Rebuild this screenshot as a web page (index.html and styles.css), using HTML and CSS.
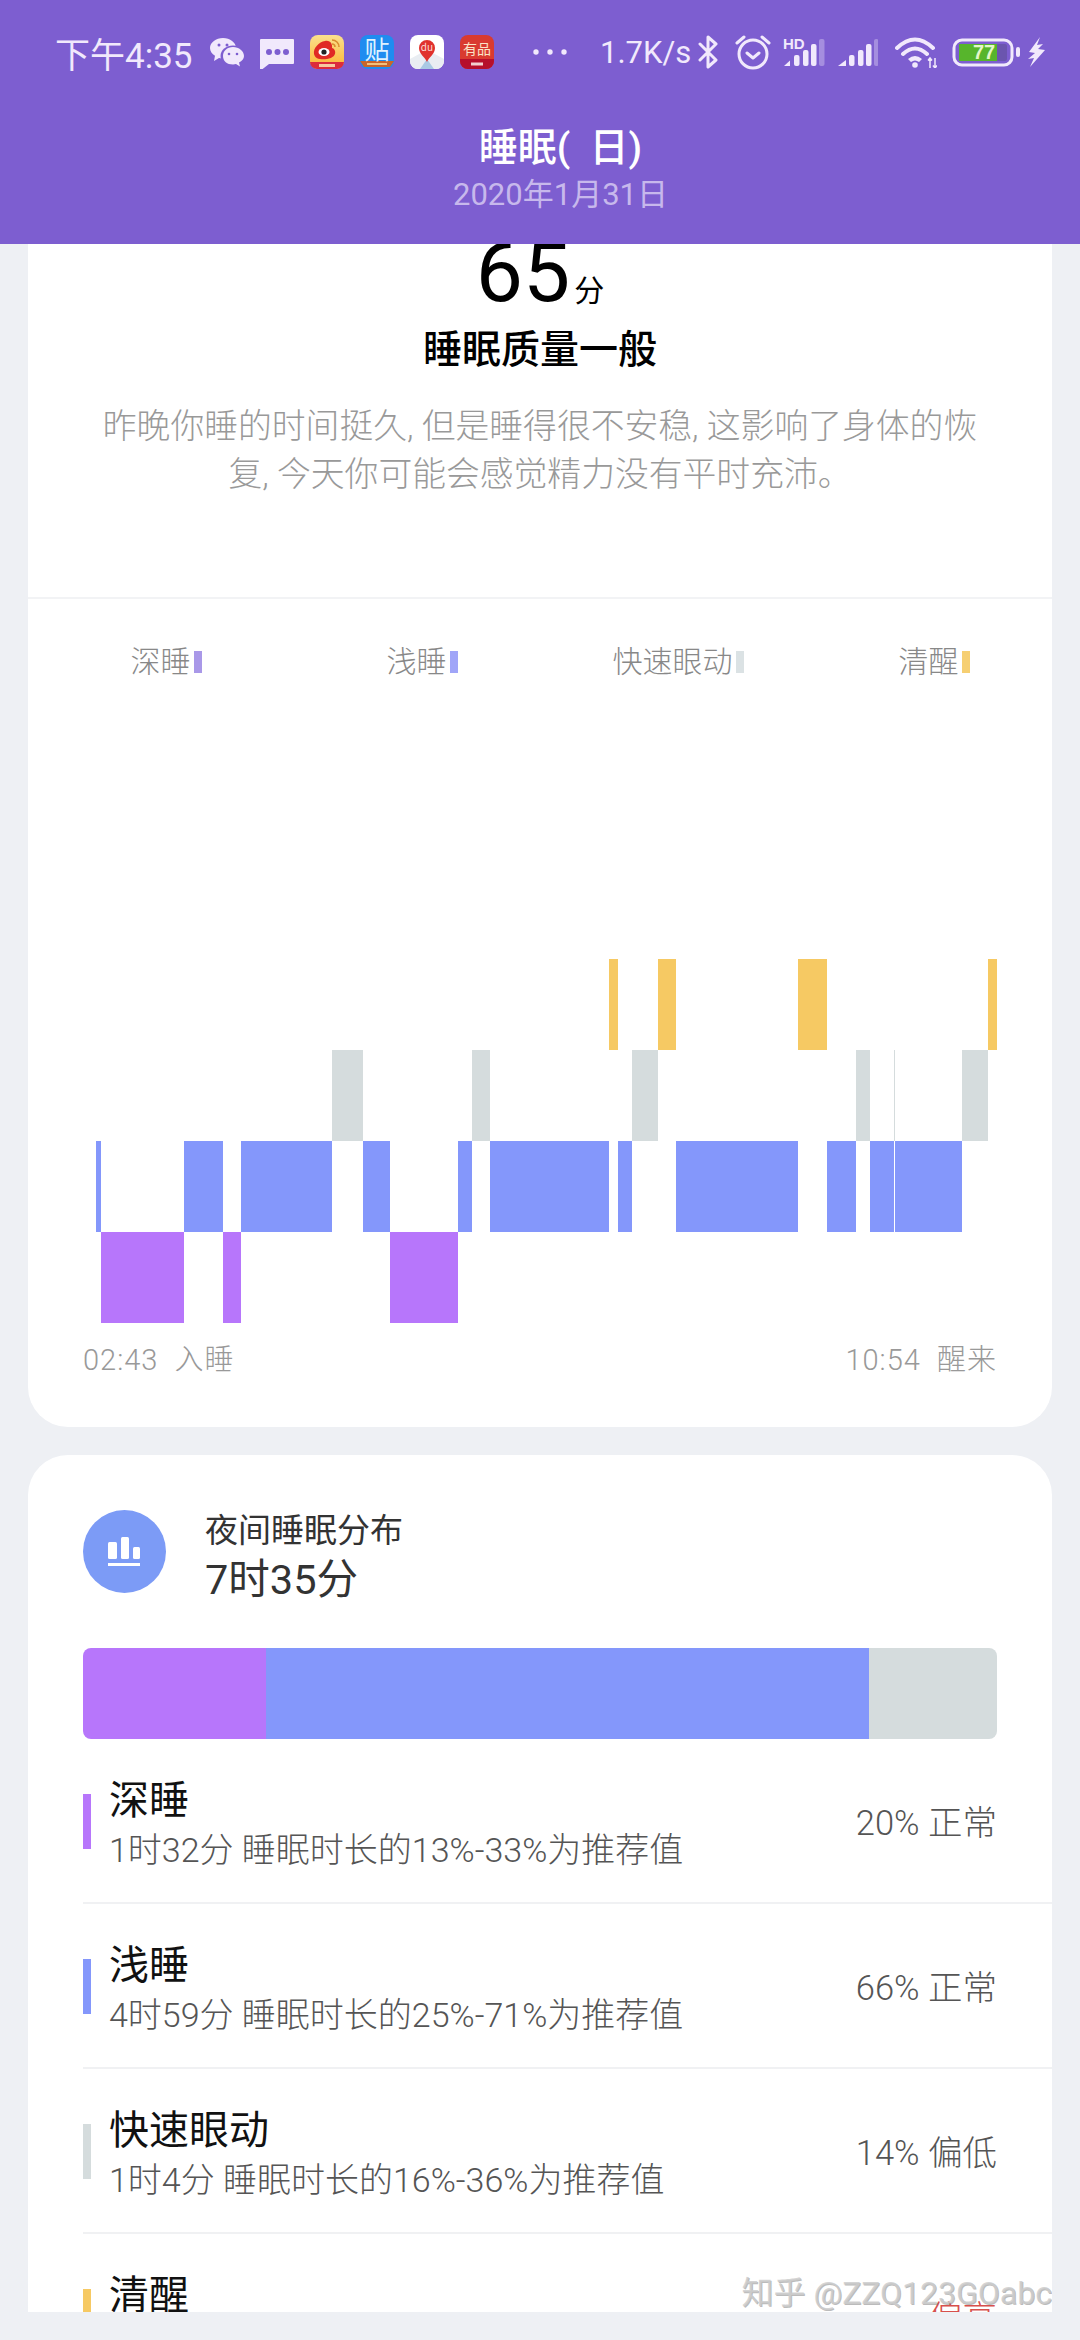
FILE: index.html
```html
<!DOCTYPE html>
<html>
<head>
  <meta charset="UTF-8">
  <title>睡眠</title>
  <link rel="stylesheet" href="styles.css">
</head>
<body>
  <header class="app-header">
    <div class="status-bar">
      <span class="time">下午4:35</span>
      <div class="notify">
        <svg class="app-icon" viewBox="0 0 34 34">
          <path class="ic" d="M13 3C6 3 0 7.500 0 13c0 3.200 2 6 5 7.800L4 26l5-3c2 .5 3 .5 5 .5C20 23.500 26 19 26 13 26 7.500 20 3 13 3z"/>
          <ellipse cx="23" cy="21" rx="12.500" ry="10.500" fill="#7d5ed0"/>
          <path class="ic" d="M23 12c-6 0-10 4-10 9s4 8.500 10 8.500c1.200 0 2.200-.2 3-.4l4 2.400-1-4c3-1.600 5-3.800 5-6.500 0-5-5-9-11-9z"/>
          <circle cx="9" cy="10" r="1.500" fill="#7d5ed0"/><circle cx="17" cy="10" r="1.500" fill="#7d5ed0"/>
          <circle cx="19" cy="19" r="1.300" fill="#7d5ed0"/><circle cx="27" cy="19" r="1.300" fill="#7d5ed0"/>
        </svg>
        <svg class="app-icon" viewBox="0 0 34 34">
          <path class="ic" d="M1 4h32a1 1 0 0 1 1 1v23a1 1 0 0 1-1 1H9l-7 5.500H0V5a1 1 0 0 1 1-1z"/>
          <circle cx="9" cy="17" r="3" fill="#7d5ed0"/><circle cx="17.500" cy="17" r="3" fill="#7d5ed0"/><circle cx="26" cy="17" r="3" fill="#7d5ed0"/>
        </svg>
        <svg class="app-icon" viewBox="0 0 34 34">
          <defs><linearGradient id="wb" x1="0" y1="0" x2="0" y2="1"><stop offset="0" stop-color="#fbe08e"/><stop offset="1" stop-color="#fbb531"/></linearGradient></defs>
          <rect width="34" height="34" rx="8" fill="url(#wb)"/>
          <path d="M0 27h34v0a8 8 0 0 1-7 7H7a8 8 0 0 1-7-7z" fill="#dc2c3c"/>
          <path d="M15 6C9 7 3 13 4 19c1 5 7 6 13 5 6-1 9-4 8-8-.5-2-2-3-3-3 .6-3-1-8-7-7z" fill="#e02a24"/>
          <ellipse cx="14" cy="17" rx="5.500" ry="4" fill="#fff"/>
          <circle cx="14" cy="17" r="2.600" fill="#222"/>
          <path d="M22 5c4 0 7 3 7 7M22 9c2 0 3 1.500 3 3" fill="none" stroke="#d98b2e" stroke-width="1.500"/>
          <rect x="9" y="29" width="16" height="3" fill="#f7c9a0"/>
        </svg>
        <svg class="app-icon" viewBox="0 0 34 34">
          <rect width="34" height="34" rx="8" fill="#1f8cf0"/>
          <path d="M0 26h34l-4 6H4z" fill="#c9652a"/>
          <rect x="7" y="28" width="20" height="2" fill="#f2c27d"/>
          <text class="badge-text" x="17" y="24" font-size="25" fill="#dff3ff">贴</text>
        </svg>
        <svg class="app-icon" viewBox="0 0 34 34">
          <rect width="34" height="34" rx="8" fill="#fff"/>
          <path d="M0 24l11-6 6 8 6-8 11 6v2a8 8 0 0 1-8 8H8a8 8 0 0 1-8-8z" fill="#e9edf2"/>
          <path d="M17 24l7 10H10z" fill="#a9c9e4"/>
          <path d="M17 27c-2-5-8-8-8-14a8 8 0 0 1 16 0c0 6-6 9-8 14z" fill="#e0322d"/>
          <text class="badge-text" x="17" y="16" font-size="10" fill="#fbdcd8">du</text>
        </svg>
        <svg class="app-icon" viewBox="0 0 34 34">
          <rect width="34" height="34" rx="8" fill="#d93a30"/>
          <path d="M0 24h34v2a8 8 0 0 1-8 8H8a8 8 0 0 1-8-8z" fill="#b60f2c"/>
          <rect x="11" y="27.500" width="12" height="3" fill="#f3cfd0"/>
          <text class="badge-text" x="17" y="19" font-size="14" fill="#f9e3c6">有品</text>
        </svg>
      </div>
      <svg class="dots" viewBox="0 0 34 6">
        <circle cx="3" cy="3" r="2.700"/><circle cx="17" cy="3" r="2.700"/><circle cx="31" cy="3" r="2.700"/>
      </svg>
      <span class="speed">1.7K/s</span>
      <svg class="sys-icon bluetooth" viewBox="0 0 21 34">
        <path class="line" d="M2 9l16 16-8 7V2l8 7L2 25"/>
      </svg>
      <svg class="sys-icon alarm" viewBox="0 0 36 36">
        <circle class="line" cx="18" cy="20" r="14"/>
        <path class="line" d="M2 9l7-6M34 9l-7-6M12 19l6 5 6-5"/>
      </svg>
      <svg class="sys-icon signal" viewBox="0 0 42 31">
        <text class="hd-text" x="0" y="12">HD</text>
        <path class="ic" d="M1 29l6-5.500V29z"/>
        <rect class="ic" x="11" y="18" width="5.500" height="11" rx="2"/>
        <rect class="ic" x="20" y="13" width="5.500" height="16" rx="2"/>
        <rect class="ic" x="28" y="7" width="5.500" height="22" rx="2"/>
        <rect class="ic dim" x="36" y="2" width="5.500" height="27" rx="2"/>
      </svg>
      <svg class="sys-icon signal2" viewBox="0 0 40 31">
        <path class="ic" d="M0 29l8-6v6z"/>
        <rect class="ic" x="11" y="18" width="5.500" height="11" rx="2"/>
        <rect class="ic" x="20" y="13" width="5.500" height="16" rx="2"/>
        <rect class="ic" x="28" y="7" width="5.500" height="22" rx="2"/>
        <rect class="ic dim" x="36" y="2" width="4.500" height="27" rx="2"/>
      </svg>
      <svg class="sys-icon wifi" viewBox="0 0 42 32">
        <path class="line wave" d="M2 12Q20-5 38 12M8 18Q20 7 32 18"/>
        <path class="ic" d="M13 23q7-6 14 0l-3 3q-4-3-8 0z"/>
        <circle class="ic" cx="20" cy="29" r="2.800"/>
        <path class="thin" d="M35 22v10M33 24.500l2-2.500 2 2.500M40 22v10M38 29.500l2 2.500 2-2.500"/>
      </svg>
      <svg class="sys-icon battery" viewBox="0 0 68 30">
        <rect class="line" x="2" y="3" width="58" height="25" rx="8"/>
        <rect x="7" y="7" width="48" height="17" rx="2" fill="#6b55ae"/>
        <rect x="7" y="7" width="38" height="17" fill="#57b52c"/>
        <text class="batt-text" x="32" y="22">77</text>
        <rect class="ic" x="64" y="10" width="4" height="10" rx="2"/>
      </svg>
      <svg class="sys-icon bolt" viewBox="0 0 17 30">
        <path class="ic" d="M12 0L1 15l6 1-7 6 0 0 6-1-4 9L17 13l-7-1 5-5-6 1z"/>
      </svg>
    </div>
    <h1 class="page-title">睡眠(  日)</h1>
    <div class="page-date">2020年1月31日</div>
  </header>

  <main class="page">
    <section class="card score-card">
      <div class="score"><span class="score-num">65</span><span class="score-unit">分</span></div>
      <h2 class="score-title">睡眠质量一般</h2>
      <p class="score-desc">昨晚你睡的时间挺久, 但是睡得很不安稳, 这影响了身体的恢<br>复, 今天你可能会感觉精力没有平时充沛。</p>

      <div class="legend">
        <span class="legend-item">深睡<i class="legend-bar deep"></i></span>
        <span class="legend-item">浅睡<i class="legend-bar light"></i></span>
        <span class="legend-item">快速眼动<i class="legend-bar rem"></i></span>
        <span class="legend-item">清醒<i class="legend-bar awake"></i></span>
      </div>

      <svg class="stage-chart" viewBox="28 959 1024 364">
        <g class="s-light">
          <rect x="96" y="1141" width="5" height="91"/>
          <rect x="184" y="1141" width="39" height="91"/>
          <rect x="241" y="1141" width="91" height="91"/>
          <rect x="363" y="1141" width="27" height="91"/>
          <rect x="458" y="1141" width="14" height="91"/>
          <rect x="490" y="1141" width="119" height="91"/>
          <rect x="618" y="1141" width="14" height="91"/>
          <rect x="676" y="1141" width="122" height="91"/>
          <rect x="827" y="1141" width="29" height="91"/>
          <rect x="870" y="1141" width="24" height="91"/>
          <rect x="895" y="1141" width="67" height="91"/>
        </g>
        <g class="s-deep">
          <rect x="101" y="1232" width="83" height="91"/>
          <rect x="223" y="1232" width="18" height="91"/>
          <rect x="390" y="1232" width="68" height="91"/>
        </g>
        <g class="s-rem">
          <rect x="332" y="1050" width="31" height="91"/>
          <rect x="472" y="1050" width="18" height="91"/>
          <rect x="632" y="1050" width="26" height="91"/>
          <rect x="856" y="1050" width="14" height="91"/>
          <rect x="894" y="1050" width="1" height="91"/>
          <rect x="962" y="1050" width="26" height="91"/>
        </g>
        <g class="s-awake">
          <rect x="609" y="959" width="9" height="91"/>
          <rect x="658" y="959" width="18" height="91"/>
          <rect x="798" y="959" width="29" height="91"/>
          <rect x="988" y="959" width="9" height="91"/>
        </g>
      </svg>

      <div class="chart-axis">
        <span>02:43&nbsp; 入睡</span>
        <span>10:54&nbsp; 醒来</span>
      </div>
    </section>

    <section class="card dist-card">
      <div class="dist-head">
        <svg class="dist-icon" viewBox="0 0 83 83">
          <circle cx="41.500" cy="41.500" r="41.500" fill="#7c9bf6"/>
          <rect x="25" y="32" width="9" height="17" rx="1.500" fill="#fff"/>
          <rect x="38" y="27" width="8" height="22" rx="1.500" fill="#fff"/>
          <rect x="50" y="37" width="7" height="12" rx="1.500" fill="#fff"/>
          <rect x="25" y="53" width="32" height="3" fill="#fff"/>
        </svg>
        <div class="dist-text">
          <div class="dist-label">夜间睡眠分布</div>
          <div class="dist-total">7时35分</div>
        </div>
      </div>

      <div class="dist-bar">
        <div class="seg deep" style="width: 20%"></div>
        <div class="seg light" style="width: 66%"></div>
        <div class="seg rem" style="width: 14%"></div>
      </div>

      <div class="row">
        <i class="row-mark deep"></i>
        <div class="row-text">
          <div class="row-title">深睡</div>
          <div class="row-sub">1时32分 睡眠时长的13%-33%为推荐值</div>
        </div>
        <div class="row-value">20% 正常</div>
      </div>
      <div class="row">
        <i class="row-mark light"></i>
        <div class="row-text">
          <div class="row-title">浅睡</div>
          <div class="row-sub">4时59分 睡眠时长的25%-71%为推荐值</div>
        </div>
        <div class="row-value">66% 正常</div>
      </div>
      <div class="row">
        <i class="row-mark rem"></i>
        <div class="row-text">
          <div class="row-title">快速眼动</div>
          <div class="row-sub">1时4分 睡眠时长的16%-36%为推荐值</div>
        </div>
        <div class="row-value">14% 偏低</div>
      </div>
      <div class="row">
        <i class="row-mark awake"></i>
        <div class="row-text">
          <div class="row-title">清醒</div>
        </div>
        <div class="row-value warn">偏高</div>
      </div>

      <div class="watermark">知乎 @ZZQ123GOabc</div>
    </section>
  </main>
</body>
</html>
```

FILE: styles.css
```css
html, body {
  margin: 0;
  padding: 0;
}
body {
  width: 1080px;
  height: 2340px;
  overflow: hidden;
  background-color: #eef0f4;
  font-family: Roboto, "Noto Sans CJK SC", sans-serif;
}
i {
  display: block;
  font-style: normal;
}

/* 顶部 */
.app-header {
  position: relative;
  z-index: 2;
  height: 244px;
  background-color: #7d5ed0;
  color: #fff;
  text-align: center;
}
.status-bar {
  display: flex;
  align-items: center;
  height: 104px;
  padding-left: 55px;
  color: #f1e9fc;
}
.time {
  flex: none;
  width: 138px;
  margin-right: 17px;
  font-size: 35px;
  text-align: left;
  white-space: nowrap;
}
.notify {
  display: flex;
  flex: none;
  gap: 16px;
}
.app-icon {
  display: block;
  width: 34px;
  height: 34px;
}
.ic {
  fill: #f1e9fc;
}
.dim {
  opacity: 0.35;
}
.line {
  fill: none;
  stroke: #f1e9fc;
  stroke-width: 3;
  stroke-linecap: round;
  stroke-linejoin: round;
}
.wave {
  stroke-width: 4;
}
.thin {
  fill: none;
  stroke: #f1e9fc;
  stroke-width: 1.500;
}
.badge-text {
  font-family: "Noto Sans CJK SC", sans-serif;
  text-anchor: middle;
}
.hd-text {
  font-family: "Liberation Sans", sans-serif;
  font-size: 15px;
  font-weight: bold;
  fill: #f1e9fc;
}
.batt-text {
  font-family: "Liberation Sans", sans-serif;
  font-size: 20px;
  font-weight: bold;
  text-anchor: middle;
  fill: #e4f7c9;
}
.dots {
  flex: none;
  width: 34px;
  height: 6px;
  margin-left: 39px;
  fill: #f1e9fc;
}
.speed {
  flex: none;
  width: 90px;
  margin-left: 33px;
  font-size: 31px;
  text-align: left;
  white-space: nowrap;
}
.sys-icon {
  display: block;
  flex: none;
}
.bluetooth {
  width: 21px;
  height: 34px;
  margin-left: 8px;
}
.alarm {
  width: 36px;
  height: 36px;
  margin-left: 16px;
}
.signal {
  width: 42px;
  height: 31px;
  margin-left: 12px;
}
.signal2 {
  width: 40px;
  height: 31px;
  margin-left: 13px;
}
.wifi {
  width: 42px;
  height: 32px;
  margin-left: 17px;
}
.battery {
  width: 68px;
  height: 30px;
  margin-left: 15px;
}
.bolt {
  width: 17px;
  height: 30px;
  margin-left: 8px;
}
.page-title {
  margin: 22px 0 0;
  padding-left: 41px;
  font-size: 39px;
  line-height: 44px;
  font-weight: 500;
  white-space: pre;
}
.page-date {
  margin-top: 7px;
  padding-left: 41px;
  font-size: 31px;
  line-height: 36px;
  color: #c7b8ec;
}

/* 卡片 */
.page {
  padding: 0 28px;
}
.card {
  background-color: #fff;
}
.score-card {
  padding-bottom: 49px;
  border-radius: 0 0 40px 40px;
  text-align: center;
}
.score {
  display: flex;
  justify-content: center;
  align-items: baseline;
  height: 84px;
  margin-top: -13px;
  color: #000;
}
.score-num {
  font-size: 84px;
  line-height: 84px;
}
.score-unit {
  margin-left: 4px;
  font-size: 30px;
  line-height: 84px;
}
.score-title {
  margin: 10px 0 0;
  font-size: 39px;
  line-height: 50px;
  font-weight: 500;
  color: #000;
}
.score-desc {
  margin: 28px 0 0;
  padding-bottom: 98px;
  border-bottom: 2px solid #f2f3f5;
  font-size: 33.800px;
  font-weight: 300;
  line-height: 48px;
  color: #999;
}
.legend {
  display: grid;
  grid-template-columns: repeat(4, 256px);
  margin: 43px 0 0 10px;
}
.legend-item {
  display: flex;
  justify-content: center;
  align-items: center;
  gap: 3px;
  font-size: 30px;
  font-weight: 300;
  line-height: 40px;
  color: #888;
}
.legend-bar {
  width: 8px;
  height: 22px;
}
.legend-bar.deep {
  background-color: #a998e8;
}
.legend-bar.light {
  background-color: #a0a5f8;
}
.legend-bar.rem {
  background-color: #dbe2e4;
}
.legend-bar.awake {
  background-color: #f6cf72;
}
.stage-chart {
  display: block;
  width: 1024px;
  height: 364px;
  margin-top: 277px;
}
.s-light {
  fill: #8497fb;
}
.s-deep {
  fill: #b776fb;
}
.s-rem {
  fill: #d5dcdd;
}
.s-awake {
  fill: #f6c963;
}
.chart-axis {
  display: flex;
  justify-content: space-between;
  margin-top: 19px;
  padding: 0 55px;
  font-size: 29px;
  font-weight: 300;
  letter-spacing: 1px;
  line-height: 36px;
  color: #999;
}

/* 睡眠分布 */
.dist-card {
  position: relative;
  height: 802px;
  margin-top: 28px;
  padding: 55px 0 0 55px;
  border-radius: 40px 40px 0 0;
  overflow: hidden;
}
.dist-head {
  display: flex;
  align-items: flex-start;
  gap: 39px;
}
.dist-icon {
  display: block;
  flex: none;
  width: 83px;
  height: 83px;
}
.dist-text {
  margin-top: -2px;
  color: #333;
}
.dist-label {
  font-size: 33px;
  line-height: 46px;
}
.dist-total {
  margin-top: 1px;
  font-size: 41.500px;
  line-height: 50px;
}
.dist-bar {
  display: flex;
  width: 914px;
  height: 91px;
  margin-top: 43px;
  border-radius: 8px;
  overflow: hidden;
}
.seg.deep, .row-mark.deep {
  background-color: #b776fb;
}
.seg.light, .row-mark.light {
  background-color: #8497fb;
}
.seg.rem, .row-mark.rem {
  background-color: #d5dcdd;
}
.row-mark.awake {
  background-color: #f6c963;
}
.row {
  display: flex;
  align-items: center;
  box-sizing: border-box;
  height: 165px;
  padding-right: 55px;
  border-bottom: 2px solid #f0f1f3;
}
.row:last-of-type {
  border-bottom: none;
}
.row-mark {
  flex: none;
  width: 8px;
  height: 55px;
  margin: 2px 18px 0 0;
}
.row-text {
  min-height: 97px;
  margin-top: 8px;
}
.row-title {
  font-size: 40px;
  line-height: 50px;
  color: #111;
}
.row-sub {
  margin-top: 1px;
  font-size: 34px;
  font-weight: 300;
  line-height: 46px;
  color: #555;
}
.row-value {
  margin: 4px 0 0 auto;
  font-size: 34.500px;
  font-weight: 300;
  line-height: 46px;
  color: #555;
}
.row-value.warn {
  color: #d8504c;
}
.watermark {
  position: absolute;
  top: 816px;
  right: 0;
  font-size: 32px;
  line-height: 44px;
  white-space: nowrap;
  color: rgba(205, 205, 205, 0.85);
  text-shadow: 1px 1px 0 rgba(120, 120, 120, 0.5);
}
```
